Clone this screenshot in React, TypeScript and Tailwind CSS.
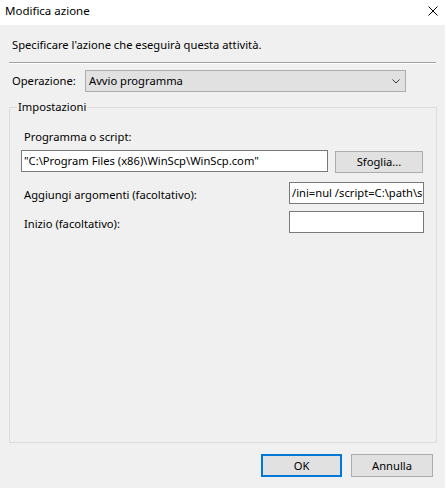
import React from 'react';

const font = "font-['Noto_Sans',sans-serif] text-[11.2px] leading-[16px] text-black";

function CloseIcon() {
    return (
        <svg width="10" height="10" viewBox="0 0 10 10" className="text-black">
            <path d="M0.5 0.5 L9.5 9.5 M9.5 0.5 L0.5 9.5" stroke="currentColor" strokeWidth="1" fill="none"/>
        </svg>
    );
}

function Chevron() {
    return (
        <svg width="8" height="5" viewBox="0 0 8 5" className="text-[#333]">
            <path d="M0.5 0.5 L4 4 L7.5 0.5" stroke="currentColor" strokeWidth="1" fill="none"/>
        </svg>
    );
}

function TextField({value, className}: {value: string; className: string}) {
    return (
        <div className={`h-[22px] bg-white border border-[#7a7a7a] flex items-center px-[2px] overflow-hidden whitespace-nowrap ${className}`}>
            {value}
        </div>
    );
}

export default function App() {
    return (
        <div className={`w-[446px] h-[488px] bg-[#f0f0f0] border-r border-white flex flex-col ${font}`}>
            {/* barra del titolo */}
            <div className="h-[25px] bg-white flex items-center justify-between pl-[5px] pr-[7px]">
                <span className="-mt-[4px] text-[11.5px]">Modifica azione</span>
                <span className="-mt-[3px]"><CloseIcon/></span>
            </div>

            <div className="mt-[12px] pl-[12px]">Specificare l'azione che eseguirà questa attività.</div>

            <div className="mt-[9px] ml-[9px] w-[427px] h-[2px] border-t border-[#a0a0a0] border-b border-b-white"/>

            <div className="mt-[6px] flex items-center">
                <span className="pl-[12px] w-[85px]">Operazione:</span>
                <div className="w-[321px] h-[22px] bg-[#e1e1e1] border border-[#adadad] flex items-center justify-between pl-[3px] pr-[5px]">
                    <span>Avvio programma</span>
                    <Chevron/>
                </div>
            </div>

            <fieldset className="mt-[7px] ml-[9px] w-[428px] h-[344px] border border-[#dcdcdc] p-0 m-0">
                <legend className="ml-[7px] px-[1px]">Impostazioni</legend>
                <div className="pl-[11px] pr-[12px]">
                    <div className="mt-[14px] pl-[3px]">Programma o script:</div>
                    <div className="mt-[5px] flex items-start gap-[7px]">
                        <TextField value={'"C:\\Program Files (x86)\\WinScp\\WinScp.com"'} className="w-[307px]"/>
                        <button className="mt-[1px] w-[88px] h-[22px] bg-[#e1e1e1] border border-[#adadad]">Sfoglia...</button>
                    </div>
                    <div className="mt-[9px] flex items-center justify-between">
                        <span className="pl-[3px] pt-[3px]">Aggiungi argomenti (facoltativo):</span>
                        <TextField value={'/ini=nul /script=C:\\path\\script.txt'} className="w-[135px]"/>
                    </div>
                    <div className="mt-[7px] flex items-center justify-between">
                        <span className="pl-[3px] pt-[3px]">Inizio (facoltativo):</span>
                        <TextField value="" className="w-[135px]"/>
                    </div>
                </div>
            </fieldset>

            <div className="mt-[11px] flex justify-end gap-[9px] pr-[12px]">
                <button className="w-[81px] h-[23px] bg-[#e1e1e1] border-2 border-[#0078d7]">OK</button>
                <button className="w-[82px] h-[23px] bg-[#e1e1e1] border border-[#adadad]">Annulla</button>
            </div>
        </div>
    );
}
